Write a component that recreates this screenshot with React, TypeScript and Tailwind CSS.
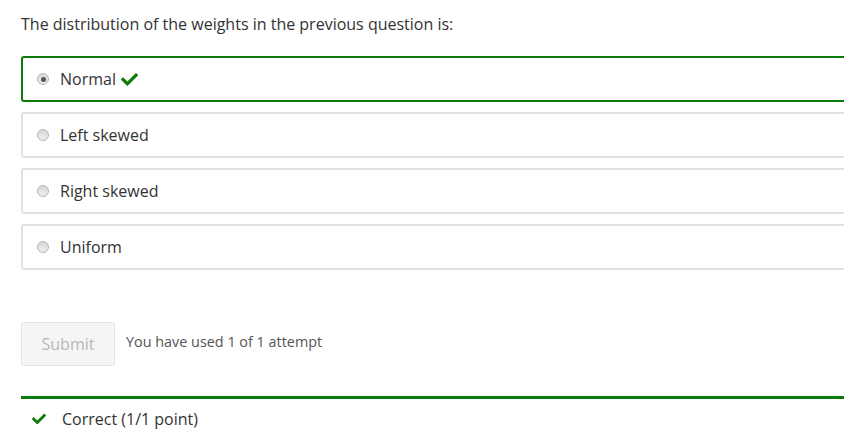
import React from "react";
import { FaCheck } from "react-icons/fa";

const options = ["Normal", "Left skewed", "Right skewed", "Uniform"];

export default function App() {
  return (
    <div className="w-[844px] h-[448px] overflow-hidden bg-white" style={{ fontFamily: '"Open Sans", sans-serif' }}>
      <div className="w-[900px] pl-[21px] pt-[13px]">
        <p className="text-[16px] leading-[22px] text-[#333]">The distribution of the weights in the previous question is:</p>
        <div className="mt-[21px] flex flex-col gap-[10px]">
          {options.map((o, i) => (
            <div
              key={o}
              className={
                i === 0
                  ? "h-[46px] flex items-center rounded-[3px] border-2 border-[#0b7c0b] pl-[14px]"
                  : "h-[46px] flex items-center rounded-[3px] border-2 border-[#e2e2e2] pl-[14px]"
              }
            >
              <span className="w-[12px] h-[12px] rounded-full border border-[#b5b5b5] bg-gradient-to-b from-[#d8d8d8] to-[#eeeeee] flex items-center justify-center">
                {i === 0 && <span className="w-[5px] h-[5px] rounded-full bg-[#555]" />}
              </span>
              <span className="ml-[11px] text-[16px] text-[#333] leading-[22px]">{o}</span>
              {i === 0 && <FaCheck className="ml-[5px] text-[#0b7c0b] w-[17px] h-[17px]" />}
            </div>
          ))}
        </div>
        <div className="mt-[52px] flex items-center">
          <button className="w-[94px] h-[44px] rounded-[3px] border border-[#e4e4e4] bg-[#f5f5f5] text-[16px] text-[#b8b8b8]">Submit</button>
          <span className="ml-[11px] text-[14.4px] text-[#555] -mt-[5px]">You have used 1 of 1 attempt</span>
        </div>
        <div className="mt-[30px] h-[3px] bg-[#0b7c0b]" />
        <div className="mt-[9px] flex items-center h-[22px]">
          <FaCheck className="ml-[11px] text-[#0b7c0b] w-[14px] h-[14px]" />
          <span className="ml-[16px] text-[16px] text-[#333]">Correct (1/1 point)</span>
        </div>
      </div>
    </div>
  );
}
